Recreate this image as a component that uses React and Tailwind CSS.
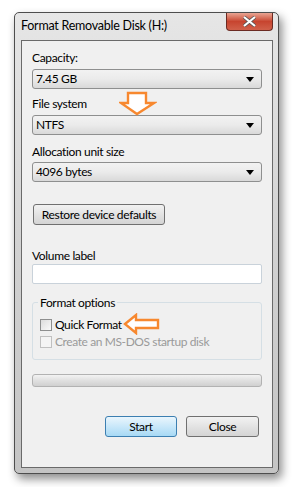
import React from 'react';

const font = { fontFamily: 'Lato, "Noto Sans", sans-serif' };

function Combo({ value }) {
  return (
    <div className="flex h-[20px] items-center justify-between rounded-[3px] border border-[#8e8f8f] bg-gradient-to-b from-[#f2f2f2] via-[#ebebeb] to-[#d9d9d9] pl-[3px] pr-[7px] text-[12px] tracking-[-0.35px] text-black">
      <span>{value}</span>
      <svg width="8" height="5" viewBox="0 0 8 5">
        <path d="M0 0H8L4 5Z" fill="#000" />
      </svg>
    </div>
  );
}

function Label({ children, className = '' }) {
  return <div className={`whitespace-nowrap text-[12px] leading-[15px] tracking-[-0.35px] text-black ${className}`}>{children}</div>;
}

function WinButton({ children, primary, className = '' }) {
  return (
    <div
      className={`flex h-[21px] items-center justify-center whitespace-nowrap rounded-[3px] border text-[12px] tracking-[-0.35px] text-black ${
        primary
          ? 'border-[#3c7fb1] bg-gradient-to-b from-[#eaf6fd] to-[#a7d9f5]'
          : 'border-[#707070] bg-gradient-to-b from-[#f2f2f2] to-[#d4d4d4]'
      } ${className}`}
    >
      {children}
    </div>
  );
}

function Check({ label, disabled }) {
  return (
    <div className="flex items-center gap-[3px]">
      <div className={`h-[12px] w-[12px] border ${disabled ? 'border-[#c0c0c0] bg-[#f4f4f4]' : 'border-[#8e8f8f] bg-gradient-to-br from-[#dcdcdc] to-[#fafafa]'}`} />
      <span className={`whitespace-nowrap text-[12px] leading-[15px] tracking-[-0.4px] ${disabled ? 'text-[#9a9a9a]' : 'text-black'}`}>{label}</span>
    </div>
  );
}

export default function App() {
  return (
    <div className="h-[487px] w-[292px] bg-white pl-[14px] pt-[12px]" style={font}>
      <div className="relative h-[462px] w-[265px] rounded-[5px] border border-[#4d4d4d] bg-gradient-to-b from-[#e6e6e6] via-[#d2d2d2] to-[#c4c4c4] shadow-[3px_5px_10px_rgba(0,0,0,0.45)]">
        {/* title bar */}
        <div className="flex h-[27px] items-start justify-between pl-[6px]">
          <span className="whitespace-nowrap pt-[5px] text-[12.5px] leading-[15px] tracking-[-0.25px] text-black">Format Removable Disk (H:)</span>
          <div className="mr-[5px] flex h-[18px] w-[47px] items-center justify-center rounded-b-[4px] border border-t-0 border-[#6b2a22] bg-gradient-to-b from-[#e8a493] via-[#c7442f] to-[#d0604a]">
            <svg width="13" height="11" viewBox="0 0 13 11">
              <path d="M1 1L12 10M12 1L1 10" stroke="#555" strokeWidth="3.6" />
              <path d="M1 1L12 10M12 1L1 10" stroke="#fff" strokeWidth="2.2" />
            </svg>
          </div>
        </div>

        {/* client area */}
        <div className="ml-[6px] flex h-[428px] w-[252px] flex-col border border-[#6a6a6a] bg-[#f0f0f0] px-[10px] pt-[9px]">
          <Label>Capacity:</Label>
          <div className="mt-[4px]">
            <Combo value="7.45 GB" />
          </div>

          <div className="relative mt-[7px]">
            <Label>File system</Label>
            <svg className="absolute left-[87px] top-[-5px]" width="38" height="25" viewBox="0 0 38 25">
              <path d="M9 2H27V12H35L18 23L2 12H9Z" fill="#fff" stroke="#f7882f" strokeWidth="2.4" strokeLinejoin="miter" />
            </svg>
          </div>
          <div className="mt-[4px]">
            <Combo value="NTFS" />
          </div>

          <Label className="mt-[9px]">Allocation unit size</Label>
          <div className="mt-[3px]">
            <Combo value="4096 bytes" />
          </div>

          <WinButton className="ml-[1px] mt-[22px] w-[132px]">Restore device defaults</WinButton>

          <Label className="mt-[23px]">Volume label</Label>
          <div className="mt-[1px] h-[20px] rounded-[2px] border border-[#c9d2da] bg-white" />

          <div className="relative mt-[18px] h-[58px] rounded-[3px] border border-[#d5dfe5] px-[7px] pt-[14px]">
            <span className="absolute left-[5px] top-[-8px] whitespace-nowrap bg-[#f0f0f0] px-[2px] text-[12px] leading-[15px] tracking-[-0.35px] text-black">Format options</span>
            <div className="relative">
              <Check label="Quick Format" />
              <svg className="absolute left-[83px] top-[-4px]" width="38" height="22" viewBox="0 0 38 22">
                <path d="M2 11L13 2V7H35V15H13V20Z" fill="#fff" stroke="#f7882f" strokeWidth="2.4" />
              </svg>
            </div>
            <div className="mt-[2px]">
              <Check label="Create an MS-DOS startup disk" disabled />
            </div>
          </div>

          <div className="mt-[14px] h-[13px] rounded-[3px] border border-[#b2b2b2] bg-gradient-to-b from-[#f3f3f3] via-[#e0e0e0] to-[#d0d0d0]" />

          <div className="mt-[29px] flex justify-end gap-[9px] pr-[3px]">
            <WinButton primary className="w-[72px]">Start</WinButton>
            <WinButton className="w-[73px]">Close</WinButton>
          </div>
        </div>
      </div>
    </div>
  );
}
